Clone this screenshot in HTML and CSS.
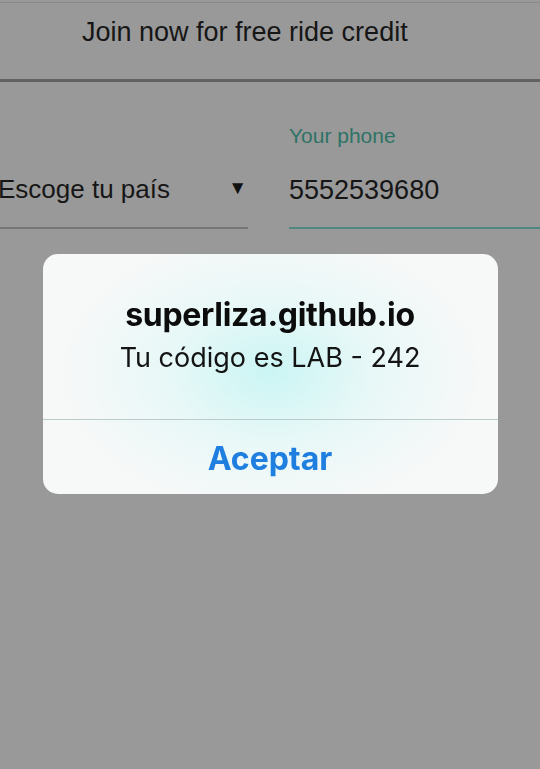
FILE: index.html
```html
<!DOCTYPE html>
<html lang="es">
<head>
<meta charset="utf-8">
<title>Join</title>
<link rel="stylesheet" href="styles.css">
</head>
<body>
<div class="page">
  <header class="header">
    <span class="header-text">Join now for free ride credit</span>
  </header>
  <div class="form-row">
    <div class="field field-country">
      <div class="select">
        <span class="select-text">Escoge tu país</span>
        <span class="caret">▼</span>
      </div>
    </div>
    <div class="field field-phone">
      <label class="label">Your phone</label>
      <div class="value">5552539680</div>
    </div>
  </div>
</div>
<div class="overlay">
  <div class="dialog">
    <div class="dialog-body">
      <div class="dialog-title">superliza.github.io</div>
      <div class="dialog-msg">Tu código es LAB - 242</div>
    </div>
    <div class="dialog-btn">Aceptar</div>
  </div>
</div>
</body>
</html>
```
FILE: styles.css
```css
html, body {
  margin: 0;
  padding: 0;
  background: #999999;
  width: 540px;
  height: 769px;
  overflow: hidden;
}
body {
  font-family: "Liberation Sans", Arial, sans-serif;
  color: #161616;
}
.page {
  border-top: 2px solid #999;
  box-shadow: inset 0 1px 0 #8a8a8a;
}
.header {
  height: 77px;
  border-bottom: 3px solid #626262;
  box-sizing: content-box;
  padding-left: 82px;
  display: flex;
  align-items: flex-start;
}
.header-text {
  font-size: 27px;
  line-height: 30px;
  margin-top: 15px;
}
.form-row {
  display: flex;
  gap: 41px;
  margin-top: 41px;
}
.field-country {
  width: 248px;
  flex: none;
  padding-top: 44px;
}
.select {
  display: flex;
  align-items: center;
  justify-content: space-between;
  height: 60px;
  border-bottom: 2px solid #767676;
  margin-left: -2px;
  padding-right: 1px;
}
.select-text {
  font-size: 26px;
  line-height: 30px;
  margin-top: -16px;
}
.caret {
  font-size: 19px;
  color: #111;
  margin-top: -18px;
}
.field-phone {
  flex: 1;
  display: flex;
  flex-direction: column;
}
.label {
  color: #2f7266;
  font-size: 21px;
  line-height: 24px;
  margin-top: 1px;
}
.value {
  font-size: 27px;
  line-height: 30px;
  margin-top: 27px;
  padding-bottom: 22px;
  border-bottom: 2px solid #4f8880;
}
.overlay {
  position: fixed;
  inset: 0;
  display: flex;
  justify-content: center;
  align-items: flex-start;
}
.dialog {
  margin-top: 254px;
  width: 455px;
  border-radius: 15px;
  background:
    radial-gradient(ellipse 210px 140px at 228px 118px, rgba(200, 245, 244, 0.95) 0%, rgba(222, 248, 247, 0.6) 50%, rgba(247, 248, 248, 0) 100%),
    #f7f8f8;
  overflow: hidden;
  font-family: Inter, "Liberation Sans", sans-serif;
  text-align: center;
}
.dialog-body {
  height: 166px;
  box-sizing: border-box;
  padding-top: 42px;
  border-bottom: 1px solid #b9cccb;
}
.dialog-title {
  font-weight: 700;
  font-size: 32px;
  line-height: 38px;
  color: #0c0c0c;
  letter-spacing: -0.3px;
}
.dialog-msg {
  font-size: 27px;
  line-height: 32px;
  margin-top: 8px;
  color: #141414;
}
.dialog-btn {
  height: 74px;
  display: flex;
  align-items: center;
  justify-content: center;
  font-weight: 700;
  font-size: 32px;
  color: #1f7fe0;
  padding-top: 2px;
  box-sizing: border-box;
}
```
